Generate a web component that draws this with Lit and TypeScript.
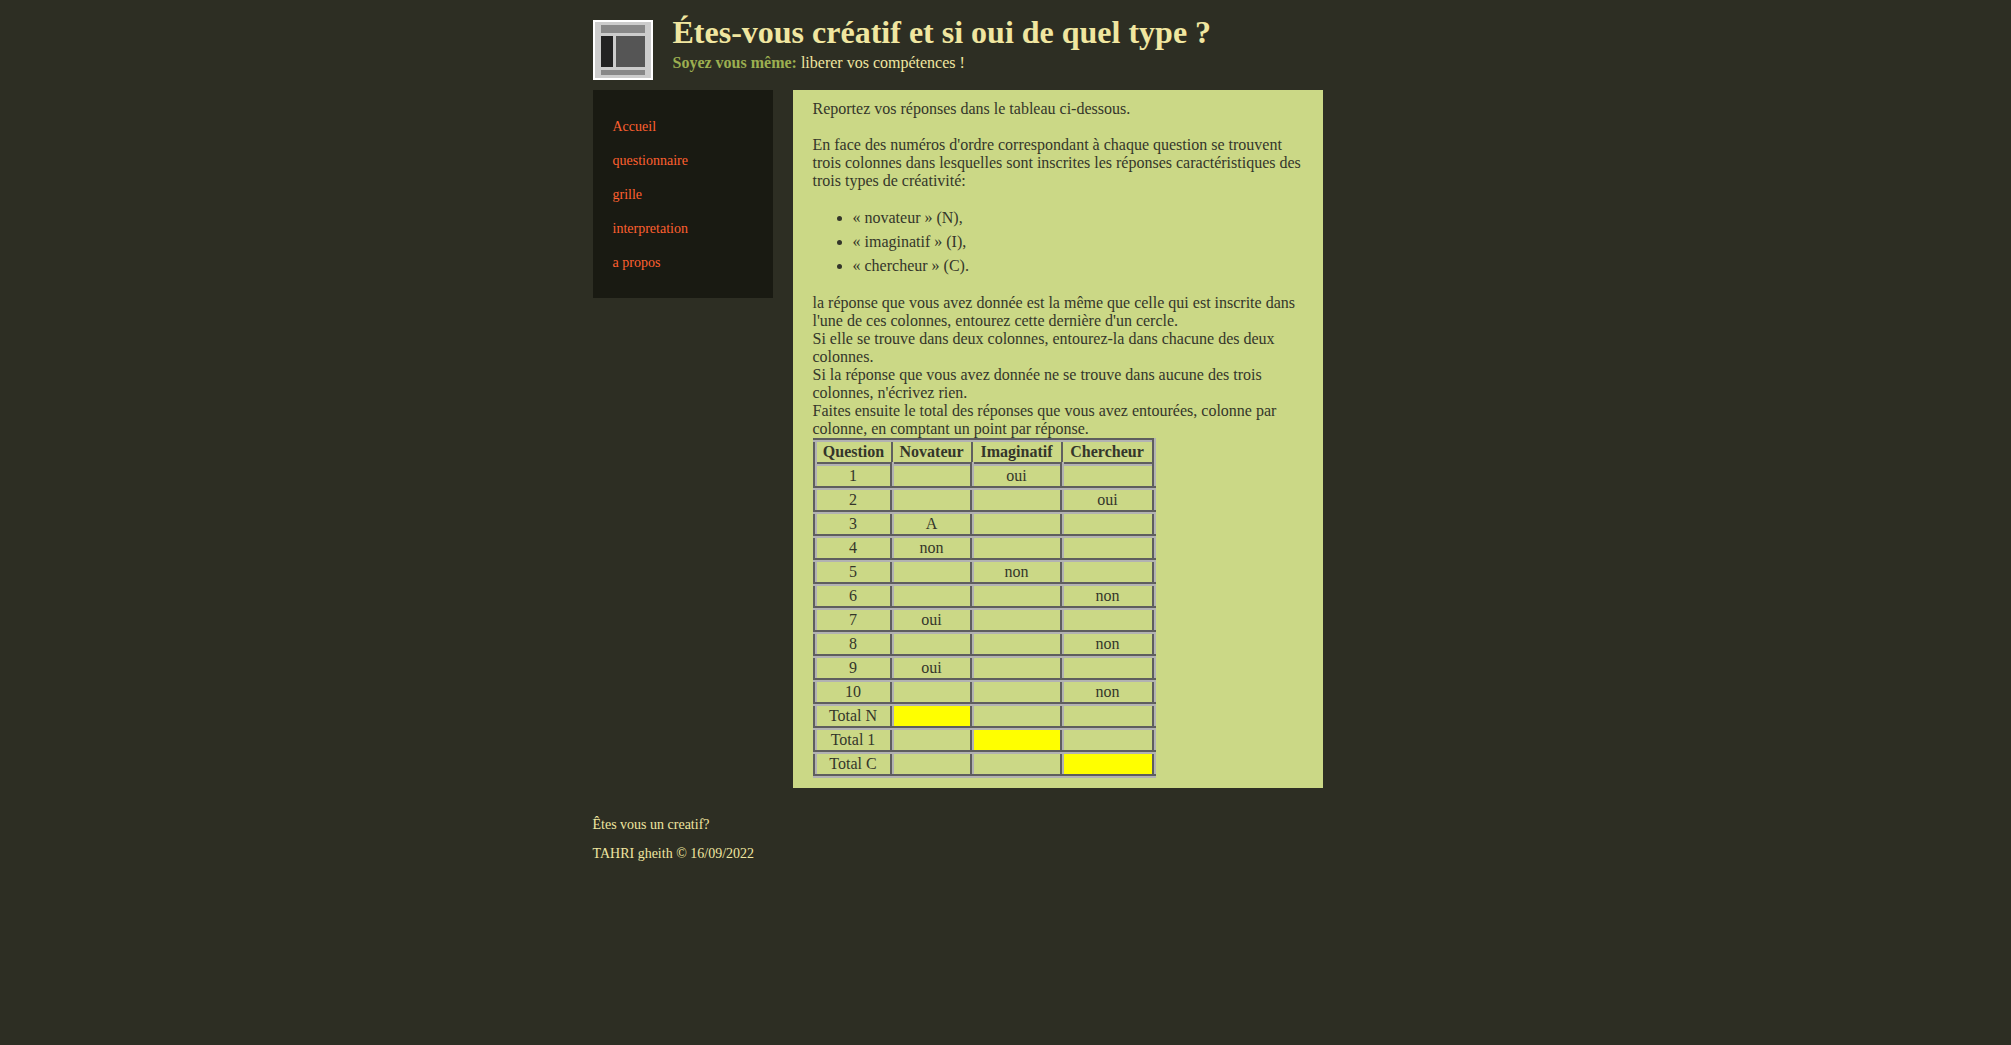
import { LitElement, html, css } from "lit";
import { customElement } from "lit/decorators.js";
import { classMap } from "lit/directives/class-map.js";

interface Row {
  label: string;
  cells: [string, string, string];
  total?: number;
}

const LINKS = ["Accueil", "questionnaire", "grille", "interpretation", "a propos"];

const ROWS: Row[] = [
  { label: "1", cells: ["", "oui", ""] },
  { label: "2", cells: ["", "", "oui"] },
  { label: "3", cells: ["A", "", ""] },
  { label: "4", cells: ["non", "", ""] },
  { label: "5", cells: ["", "non", ""] },
  { label: "6", cells: ["", "", "non"] },
  { label: "7", cells: ["oui", "", ""] },
  { label: "8", cells: ["", "", "non"] },
  { label: "9", cells: ["oui", "", ""] },
  { label: "10", cells: ["", "", "non"] },
  { label: "Total N", cells: ["", "", ""], total: 0 },
  { label: "Total 1", cells: ["", "", ""], total: 1 },
  { label: "Total C", cells: ["", "", ""], total: 2 },
];

@customElement("app-root")
export class AppRoot extends LitElement {
  static styles = css`
    :host {
      display: block;
      min-height: 100vh;
      background: #2d2e23;
      color: #f0e6a0;
      font: 16px/18px "Liberation Serif", "Times New Roman", serif;
    }
    .page {
      max-width: 730px;
      margin: 0 auto;
      padding-right: 96px;
      box-sizing: content-box;
    }
    .header {
      display: flex;
      gap: 20px;
      padding: 20px 0 10px;
    }
    .logo {
      display: block;
      flex: none;
      width: 60px;
      height: 60px;
    }
    .heading {
      margin-top: -8px;
    }
    h1 {
      margin: 0;
      font-size: 32px;
      line-height: 40px;
    }
    .tagline {
      margin: 2px 0 0;
    }
    .tagline strong {
      color: #9caf50;
    }
    .columns {
      display: flex;
      align-items: flex-start;
      gap: 20px;
    }
    .menu {
      box-sizing: border-box;
      flex: 0 0 180px;
      padding: 20px 20px 18px;
      background: #191a12;
    }
    .menu ul {
      margin: 0;
      padding: 0;
      list-style: none;
    }
    .menu li {
      padding: 8px 0;
      font-size: 14px;
    }
    .menu a {
      color: #ff6030;
      text-decoration: none;
    }
    .content {
      flex: 1;
      min-width: 0;
      padding: 10px 20px;
      background: #cbd886;
      color: #34362a;
    }
    .content p {
      margin: 0;
    }
    .content .intro {
      margin-bottom: 18px;
    }
    .types {
      margin: 16px 0;
      padding-left: 40px;
    }
    .types li {
      padding: 3px 0;
    }
    table {
      border-collapse: collapse;
      border: 4px groove #b2b2b2;
      text-align: center;
    }
    th,
    td {
      height: 18px;
      padding: 1px 2px;
      border: 4px groove #b2b2b2;
      font-weight: normal;
    }
    thead th {
      border: 2px solid #606060;
      font-weight: bold;
    }
    .col-question {
      width: 77px;
    }
    .col-novateur {
      width: 80px;
    }
    .col-imaginatif {
      width: 90px;
    }
    .col-chercheur {
      width: 92px;
    }
    .total {
      background: #ffff00;
      background-clip: padding-box;
    }
    .footer {
      padding: 28px 0 20px;
      font-size: 14px;
    }
    .footer p {
      margin: 0 0 11px;
    }
  `;

  render() {
    return html`
      <div class="page">
        <header class="header">
          <svg class="logo" viewBox="0 0 60 60" shape-rendering="crispEdges" aria-hidden="true">
            <rect width="60" height="60" fill="#fff" />
            <rect x="2" y="2" width="56" height="56" fill="#ccc" />
            <rect x="8" y="5" width="44" height="8" fill="#888" />
            <rect x="8" y="16" width="12" height="31" fill="#222" />
            <rect x="23" y="16" width="29" height="31" fill="#555" />
            <rect x="8" y="50" width="44" height="5" fill="#888" />
          </svg>
          <div class="heading">
            <h1>Étes-vous créatif et si oui de quel type ?</h1>
            <p class="tagline"><strong>Soyez vous même:</strong> liberer vos compétences !</p>
          </div>
        </header>
        <div class="columns">
          <nav class="menu">
            <ul>
              ${LINKS.map((label) => html`<li><a href="#">${label}</a></li>`)}
            </ul>
          </nav>
          <main class="content">
            <p class="intro">Reportez vos réponses dans le tableau ci-dessous.</p>
            <p>
              En face des numéros d'ordre correspondant à chaque question se trouvent trois
              colonnes dans lesquelles sont inscrites les réponses caractéristiques des trois
              types de créativité:
            </p>
            <ul class="types">
              <li>« novateur » (N),</li>
              <li>« imaginatif » (I),</li>
              <li>« chercheur » (C).</li>
            </ul>
            <p>
              la réponse que vous avez donnée est la même que celle qui est inscrite dans l'une
              de ces colonnes, entourez cette dernière d'un cercle.<br />
              Si elle se trouve dans deux colonnes, entourez-la dans chacune des deux
              colonnes.<br />
              Si la réponse que vous avez donnée ne se trouve dans aucune des trois colonnes,
              n'écrivez rien.<br />
              Faites ensuite le total des réponses que vous avez entourées, colonne par colonne,
              en comptant un point par réponse.
            </p>
            <table>
              <colgroup>
                <col class="col-question" />
                <col class="col-novateur" />
                <col class="col-imaginatif" />
                <col class="col-chercheur" />
              </colgroup>
              <thead>
                <tr>
                  <th scope="col">Question</th>
                  <th scope="col">Novateur</th>
                  <th scope="col">Imaginatif</th>
                  <th scope="col">Chercheur</th>
                </tr>
              </thead>
              <tbody>
                ${ROWS.map(
                  (row) => html`<tr>
                    <th scope="row">${row.label}</th>
                    ${row.cells.map(
                      (cell, i) =>
                        html`<td class=${classMap({ total: row.total === i })}>${cell}</td>`,
                    )}
                  </tr>`,
                )}
              </tbody>
            </table>
          </main>
        </div>
        <footer class="footer">
          <p>Êtes vous un creatif?</p>
          <p>TAHRI gheith © 16/09/2022</p>
        </footer>
      </div>
    `;
  }
}
